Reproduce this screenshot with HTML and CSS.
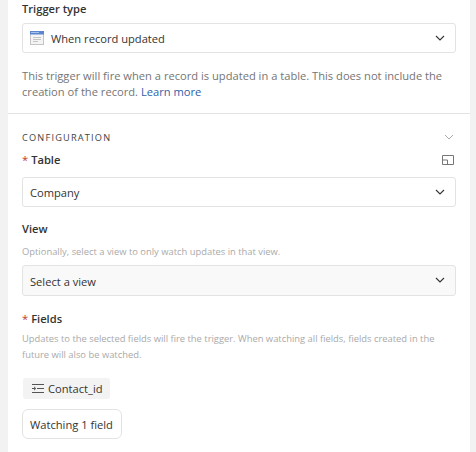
FILE: index.html
```
<!DOCTYPE html>
<html lang="en">
<head>
<meta charset="utf-8">
<title>Trigger configuration</title>
<link rel="stylesheet" href="styles.css">
</head>
<body>
<main class="panel">
  <section class="top">
    <div class="label">Trigger type</div>
    <div class="select trigger">
      <svg class="t-icon" width="14" height="14" viewBox="0 0 14 14"><rect x="0.5" y="0.5" width="13" height="13" fill="#f4f4f4" stroke="#c4c4c4"/><rect x="0" y="0" width="14" height="3.500" fill="#5a86d0"/><rect x="1" y="1" width="8" height="1" fill="#a9c2ec"/><path d="M3 6.500h8M3 8.500h8M3 10.500h5" stroke="#c4c4c4" fill="none"/></svg>
      <span class="grow">When record updated</span>
      <svg class="chev" width="10" height="6" viewBox="0 0 10 6"><path d="M1 1l4 4 4-4" fill="none" stroke="#333" stroke-width="1.100"/></svg>
    </div>
    <p class="desc">This trigger will fire when a record is updated in a table. This does not include the creation of the record. <a class="link">Learn more</a></p>
  </section>
  <section class="config">
    <div class="head">
      <span class="caps">CONFIGURATION</span>
      <svg width="10" height="6" viewBox="0 0 10 6"><path d="M1 1l4 4 4-4" fill="none" stroke="#aaa"/></svg>
    </div>
    <div class="label-row">
      <div class="label"><span class="req">*</span>Table</div>
      <svg width="12" height="10" viewBox="0 0 12 10"><path d="M.5.500h11v9H.5z M.5 5h5v4.500" fill="none" stroke="#777"/></svg>
    </div>
    <div class="select table-select">
      <span class="grow">Company</span>
      <svg class="chev" width="10" height="6" viewBox="0 0 10 6"><path d="M1 1l4 4 4-4" fill="none" stroke="#333" stroke-width="1.100"/></svg>
    </div>
    <div class="label view-label">View</div>
    <p class="hint">Optionally, select a view to only watch updates in that view.</p>
    <div class="select muted">
      <span class="grow">Select a view</span>
      <svg class="chev" width="10" height="6" viewBox="0 0 10 6"><path d="M1 1l4 4 4-4" fill="none" stroke="#333" stroke-width="1.100"/></svg>
    </div>
    <div class="label fields-label"><span class="req">*</span>Fields</div>
    <p class="hint hint-wrap">Updates to the selected fields will fire the trigger. When watching all fields, fields created in the future will also be watched.</p>
    <div class="chip">
      <svg width="12" height="9" viewBox="0 0 12 9"><path d="M0 .500h12M5 4.500h7M0 8.500h12M0 4.500h3.500M2 2.800l1.800 1.700L2 6.200" fill="none" stroke="#555"/></svg>
      <span>Contact_id</span>
    </div>
    <button class="btn">Watching 1 field</button>
  </section>
</main>
</body>
</html>
```
FILE: styles.css
```
html, body { margin: 0; padding: 0; }
body {
  width: 476px; height: 452px; overflow: hidden;
  background: #f2f2f2;
  font-family: "Open Sans", sans-serif;
  font-size: 11.150px; color: #333;
}
.panel { margin: 0 6px 0 8px; background: #fff; height: 452px; }
.top { padding: 0 14px; height: 113px; border-bottom: 1px solid #e4e4e4; }
.label { font-size: 11.150px; font-weight: 550; line-height: 16px; color: #333; }
.top .label { padding-top: 1px; }
.select {
  display: flex; align-items: center;
  box-sizing: border-box; height: 30px;
  margin-top: 6px; padding: 2px 10px 0 7px;
  border: 1px solid #e3e3e3; border-radius: 3px;
  background: #fff; line-height: 16px;
}
.trigger { padding-left: 7px; }
.t-icon { margin-right: 7px; margin-top: -3px; }
.chev { margin-top: -3px; }
.grow { flex: 1; }
.desc { margin: 15px 0 0; line-height: 16px; color: #757575; }
.link { color: #2d5fa8; }
.config { padding: 16px 14px 0; }
.head { display: flex; justify-content: space-between; align-items: center; padding-right: 2px; height: 14px; }
.caps { font-size: 9.200px; letter-spacing: 1.200px; font-weight: 500; color: #444; }
.label-row { display: flex; justify-content: space-between; align-items: center; margin-top: 8px; padding-right: 2px; }
.req { color: #c0392b; margin-right: 3px; font-weight: 400; }
.table-select { margin-top: 9px; }
.view-label { margin-top: 14px; }
.hint { margin: 7px 0 0; font-size: 9.400px; line-height: 16px; color: #aaa; }
.muted { background: #f9f9f9; margin-top: 5px; height: 31px; }
.fields-label { margin-top: 15px; }
.hint-wrap { margin-top: 4px; }
.chip {
  display: inline-flex; align-items: center; gap: 4px;
  margin: 15px 0 0 1px; padding: 0 7px 0 9px; height: 21px;
  background: #f3f3f3; border-radius: 3px;
}
.btn {
  display: block; margin-top: 10px; height: 30px; padding: 0 8px 0 7px;
  border: 1px solid #e3e3e3; border-radius: 6px;
  background: #fff; color: #333; font: inherit;
}
```
